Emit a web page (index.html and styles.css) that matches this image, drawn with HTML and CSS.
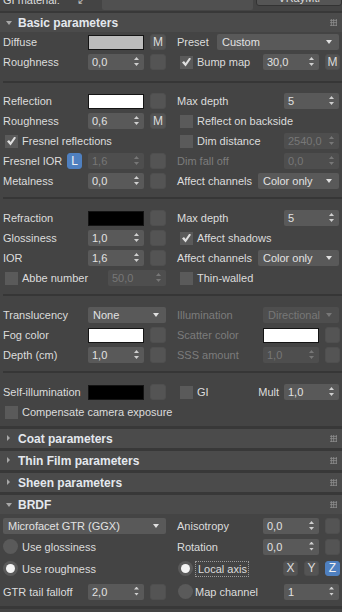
FILE: index.html
```html
<!DOCTYPE html>
<html lang="en">
<head>
  <meta charset="UTF-8">
  <meta name="viewport" content="width=device-width, initial-scale=1.0">
  <title>VRayMtl | Material parameters</title>
  <link rel="stylesheet" href="styles.css">
</head>
<body>
  <div class="topbar">
    <div class="topbar-inner">
      <span class="top-label">GI material:</span>
      <span class="top-icon">&#8601;</span>
      <span class="top-field"></span>
      <span class="top-btn">VRayMtl</span>
    </div>
  </div>
  <div class="band thin"></div>

  <!-- Basic parameters -->
  <div class="rh"><span class="tri open"></span>Basic parameters<span class="grip"></span></div>
  <div class="rb">
    <div class="row">
      <div class="cell l"><span class="lbl">Diffuse</span><span class="swatch grey"></span><span class="btn">M</span></div>
      <div class="cell r"><span class="lbl">Preset</span><span class="dd preset">Custom</span></div>
    </div>
    <div class="row">
      <div class="cell l"><span class="lbl">Roughness</span><span class="spin">0,0</span><span class="btn"></span></div>
      <div class="cell r"><span class="chk on"></span><span class="lbl">Bump map</span><span class="spin">30,0</span><span class="btn">M</span></div>
    </div>

    <div class="sep first"><div class="line"></div></div>

    <div class="row">
      <div class="cell l"><span class="lbl">Reflection</span><span class="swatch white"></span><span class="btn"></span></div>
      <div class="cell r"><span class="lbl">Max depth</span><span class="spin wide">5</span></div>
    </div>
    <div class="row">
      <div class="cell l"><span class="lbl">Roughness</span><span class="spin">0,6</span><span class="btn">M</span></div>
      <div class="cell r"><span class="chk"></span><span class="lbl">Reflect on backside</span></div>
    </div>
    <div class="row">
      <div class="cell l"><span class="chk on"></span><span class="lbl">Fresnel reflections</span></div>
      <div class="cell r"><span class="chk"></span><span class="lbl">Dim distance</span><span class="spin wide off">2540,0</span></div>
    </div>
    <div class="row">
      <div class="cell l"><span class="lbl">Fresnel IOR</span><span class="btn blue lock">L</span><span class="spin off">1,6</span><span class="btn"></span></div>
      <div class="cell r"><span class="lbl off">Dim fall off</span><span class="spin wide off">0,0</span></div>
    </div>
    <div class="row">
      <div class="cell l"><span class="lbl">Metalness</span><span class="spin">0,0</span><span class="btn"></span></div>
      <div class="cell r"><span class="lbl">Affect channels</span><span class="dd chan">Color only</span></div>
    </div>

    <div class="sep"><div class="line"></div></div>

    <div class="row">
      <div class="cell l"><span class="lbl">Refraction</span><span class="swatch black"></span><span class="btn"></span></div>
      <div class="cell r"><span class="lbl">Max depth</span><span class="spin wide">5</span></div>
    </div>
    <div class="row">
      <div class="cell l"><span class="lbl">Glossiness</span><span class="spin">1,0</span><span class="btn"></span></div>
      <div class="cell r"><span class="chk on"></span><span class="lbl">Affect shadows</span></div>
    </div>
    <div class="row">
      <div class="cell l"><span class="lbl">IOR</span><span class="spin">1,6</span><span class="btn"></span></div>
      <div class="cell r"><span class="lbl">Affect channels</span><span class="dd chan">Color only</span></div>
    </div>
    <div class="row">
      <div class="cell l"><span class="chk"></span><span class="lbl">Abbe number</span><span class="spin abbe off">50,0</span></div>
      <div class="cell r"><span class="chk"></span><span class="lbl">Thin-walled</span></div>
    </div>

    <div class="sep"><div class="line"></div></div>

    <div class="row">
      <div class="cell l"><span class="lbl">Translucency</span><span class="dd transl">None</span></div>
      <div class="cell r"><span class="lbl off">Illumination</span><span class="dd illum off">Directional</span></div>
    </div>
    <div class="row">
      <div class="cell l"><span class="lbl">Fog color</span><span class="swatch white"></span><span class="btn"></span></div>
      <div class="cell r"><span class="lbl off">Scatter color</span><span class="swatch white"></span><span class="btn"></span></div>
    </div>
    <div class="row">
      <div class="cell l"><span class="lbl">Depth (cm)</span><span class="spin">1,0</span><span class="btn"></span></div>
      <div class="cell r"><span class="lbl off">SSS amount</span><span class="spin off">1,0</span><span class="btn"></span></div>
    </div>

    <div class="sep"><div class="line"></div></div>

    <div class="row">
      <div class="cell l"><span class="lbl">Self-illumination</span><span class="swatch black"></span><span class="btn"></span></div>
      <div class="cell r"><span class="chk"></span><span class="lbl">GI</span><span class="mult">Mult</span><span class="spin wide">1,0</span></div>
    </div>
    <div class="row">
      <div class="cell l span"><span class="chk"></span><span class="lbl">Compensate camera exposure</span></div>
    </div>
  </div>

  <div class="band"></div>
  <div class="rh"><span class="tri"></span>Coat parameters<span class="grip"></span></div>
  <div class="band"></div>
  <div class="rh"><span class="tri"></span>Thin Film parameters<span class="grip"></span></div>
  <div class="band"></div>
  <div class="rh"><span class="tri"></span>Sheen parameters<span class="grip"></span></div>
  <div class="band"></div>

  <!-- BRDF -->
  <div class="rh"><span class="tri open"></span>BRDF<span class="grip"></span></div>
  <div class="rb brdf">
    <div class="row">
      <div class="cell l"><span class="dd micro">Microfacet GTR (GGX)</span></div>
      <div class="cell r"><span class="lbl">Anisotropy</span><span class="spin">0,0</span><span class="btn"></span></div>
    </div>
    <div class="row r2">
      <div class="cell l"><span class="radio"></span><span class="lbl">Use glossiness</span></div>
      <div class="cell r"><span class="lbl">Rotation</span><span class="spin">0,0</span><span class="btn"></span></div>
    </div>
    <div class="row r3">
      <div class="cell l"><span class="radio on"></span><span class="lbl">Use roughness</span></div>
      <div class="cell r"><span class="radio on"></span><span class="lbl"><span class="focus">Local axis</span></span><span class="btn axis">X</span><span class="btn axis">Y</span><span class="btn axis blue">Z</span></div>
    </div>
    <div class="row r3">
      <div class="cell l"><span class="lbl">GTR tail falloff</span><span class="spin">2,0</span><span class="btn"></span></div>
      <div class="cell r"><span class="radio"></span><span class="lbl">Map channel</span><span class="spin wide">1</span></div>
    </div>
  </div>
  <div class="band"></div>
</body>
</html>
```

FILE: styles.css
```css
* {
  box-sizing: border-box;
}
body {
  margin: 0;
  width: 342px;
  height: 612px;
  overflow: hidden;
  background: #444444;
  color: #dcdcdc;
  font-family: "Liberation Sans", Arial, sans-serif;
  font-size: 11px;
}

/* top strip, cut by the window */
.topbar {
  height: 11px;
  overflow: hidden;
}
.topbar-inner {
  display: flex;
  align-items: center;
  height: 20px;
  margin-top: -10px;
  padding-left: 3px;
}
.top-label {
  width: 74px;
}
.top-icon {
  width: 25px;
  color: #bbb;
}
.top-field {
  width: 152px;
  height: 20px;
  background: #505050;
  border-radius: 2px;
}
.top-btn {
  width: 86px;
  height: 16px;
  margin-left: 3px;
  margin-top: -4px;
  background: #555;
  border: 1px solid #333;
  border-radius: 3px;
  text-align: center;
  line-height: 14px;
}

/* rollouts */
.band {
  height: 3px;
  background: #383838;
}
.band.thin {
  height: 2px;
}
.rh {
  display: flex;
  align-items: center;
  height: 19px;
  padding-left: 6px;
  background: #4b4b4b;
  color: #e4e8ee;
  font-size: 12px;
  font-weight: bold;
}
.tri {
  position: relative;
  width: 12px;
  height: 19px;
}
.tri::before {
  content: "";
  position: absolute;
  left: 1px;
  top: 6px;
  width: 3px;
  height: 6px;
  background: #a8a8a8;
  clip-path: polygon(0 0, 100% 50%, 0 100%);
}
.tri.open::before {
  left: 0;
  top: 8px;
  width: 6px;
  height: 4px;
  clip-path: polygon(0 0, 100% 0, 50% 100%);
}
.grip {
  width: 7px;
  height: 7px;
  margin-left: auto;
  margin-right: 5px;
  background-image: radial-gradient(circle, #8c8c8c 0.9px, transparent 1.1px);
  background-size: 2.5px 2.5px;
}
.rb {
  padding-bottom: 4px;
}
.rb.brdf {
  padding-top: 2px;
  padding-bottom: 3px;
}

/* rows */
.row {
  display: grid;
  grid-template-columns: 171px 171px;
  height: 20px;
}
.row.r2 {
  height: 21px;
}
.row.r3 {
  height: 23px;
}
.cell {
  display: flex;
  align-items: center;
  white-space: nowrap;
}
.cell.l {
  padding-left: 3px;
  padding-right: 5px;
}
.cell.r {
  padding-left: 6px;
  padding-right: 2px;
}
.cell.span {
  grid-column: 1 / span 2;
}
.lbl {
  flex: 1;
}
.off {
  color: #7c7c7c;
}
.sep {
  height: 17px;
  padding-top: 6px;
  padding-left: 3px;
}
.sep.first {
  height: 19px;
  padding-top: 9px;
}
.sep .line {
  height: 2px;
  background: #363636;
}

/* controls */
.spin, .dd {
  position: relative;
  height: 16px;
  line-height: 16px;
  background: #595959;
  border-radius: 2px;
  padding-left: 4px;
  color: #e2e2e2;
}
.spin {
  width: 56px;
}
.spin.wide {
  width: 55px;
  margin-right: 1px;
}
.spin.abbe {
  width: 58px;
}
.spin.off, .dd.off {
  background: #4e4e4e;
  color: #777;
}
.spin::before, .spin::after {
  content: "";
  position: absolute;
  right: 5px;
  width: 5px;
  height: 3px;
  background: #cfcfcf;
}
.spin::before {
  top: 3px;
  clip-path: polygon(50% 0, 100% 100%, 0 100%);
}
.spin::after {
  bottom: 4px;
  clip-path: polygon(0 0, 100% 0, 50% 100%);
}
.spin.off::before, .spin.off::after {
  background: #777;
}
.dd {
  padding-left: 5px;
}
.dd::after {
  content: "";
  position: absolute;
  right: 7px;
  top: 6px;
  width: 6px;
  height: 4px;
  background: #e0e0e0;
  clip-path: polygon(0 0, 100% 0, 50% 100%);
}
.dd.off::after {
  background: #777;
}
.dd.preset {
  width: 122px;
  margin-right: 1px;
}
.dd.chan {
  width: 81px;
  margin-right: 1px;
}
.dd.transl {
  width: 78px;
}
.dd.illum {
  width: 76px;
  margin-right: 1px;
}
.dd.micro {
  width: 163px;
}
.swatch {
  width: 56px;
  height: 15px;
  border: 1px solid #141414;
}
.swatch.grey {
  background: #bcbcbc;
}
.swatch.white {
  background: #ffffff;
}
.swatch.black {
  background: #000000;
}
.btn {
  width: 16px;
  height: 16px;
  margin-left: 6px;
  background: #545454;
  border: 1px solid #4f4f4f;
  border-radius: 3px;
  text-align: center;
  line-height: 14px;
  font-size: 12px;
  color: #dcdcdc;
}
.cell.r .btn {
  width: 15px;
}
.btn.blue {
  background: #4f80c0;
  border-color: #4f80c0;
  color: #f2f2f2;
}
.btn.lock {
  width: 15px;
  margin-left: 0;
  margin-right: 6px;
}
.btn.axis {
  height: 15px;
  line-height: 13px;
  margin-left: 6px;
}
.chk {
  position: relative;
  width: 13px;
  height: 13px;
  margin-left: 2px;
  margin-right: 4px;
  background: #5a5a5a;
}
.cell.r .chk {
  margin-left: 3px;
}
.chk.on::after {
  content: "";
  position: absolute;
  left: 2px;
  top: 2px;
  width: 9px;
  height: 9px;
  background: #dedede;
  clip-path: polygon(0 55%, 22% 40%, 40% 62%, 82% 0, 100% 14%, 40% 100%);
}
.radio {
  position: relative;
  width: 15px;
  height: 15px;
  margin-right: 4px;
  border-radius: 50%;
  background: #5a5a5a;
}
.cell.r .radio {
  margin-left: 1px;
  margin-right: 2px;
}
.radio.on::after {
  content: "";
  position: absolute;
  left: 3px;
  top: 3px;
  width: 9px;
  height: 9px;
  border-radius: 50%;
  background: #f4f4f4;
}
.focus {
  padding: 1px 1px 1px 2px;
  border: 1px dotted #9a9a9a;
}
.mult {
  margin-right: 5px;
}
```
